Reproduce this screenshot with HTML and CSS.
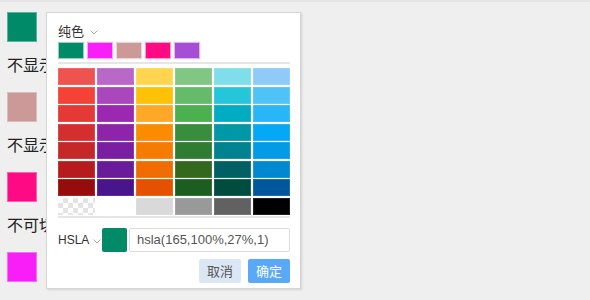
FILE: index.html
```html
<!DOCTYPE html>
<html lang="zh-CN">
<head>
<meta charset="utf-8">
<link rel="stylesheet" href="styles.css">
</head>
<body>
<div class="page">
  <div class="item">
    <div class="swatch" style="background:#008a68"></div>
    <p class="label">不显示透明度</p>
  </div>
  <div class="item">
    <div class="swatch" style="background:#cc9999"></div>
    <p class="label">不显示模式切换</p>
  </div>
  <div class="item">
    <div class="swatch" style="background:#ff0a85"></div>
    <p class="label">不可切换模式</p>
  </div>
  <div class="item">
    <div class="swatch" style="background:#f71ef7"></div>
  </div>
</div>

<div class="popup">
  <div class="head">
    <span class="mode">纯色</span>
    <svg class="chev" width="8" height="5" viewBox="0 0 8 5"><polyline points="0.5,0.5 4,4 7.5,0.5" fill="none" stroke="#aaa" stroke-width="1"/></svg>
  </div>
  <div class="presets">
    <div class="preset" style="background:#008a68"></div>
    <div class="preset" style="background:#f81ef8"></div>
    <div class="preset" style="background:#cc9999"></div>
    <div class="preset" style="background:#ff0a85"></div>
    <div class="preset" style="background:#a64fd4"></div>
  </div>
  <div class="sep"></div>
  <div class="grid-wrap">
    <div class="grid">
      <div class="cell" style="background:#ef5350"></div>
      <div class="cell" style="background:#ba68c8"></div>
      <div class="cell" style="background:#ffd54f"></div>
      <div class="cell" style="background:#81c784"></div>
      <div class="cell" style="background:#80deea"></div>
      <div class="cell" style="background:#90caf9"></div>

      <div class="cell" style="background:#f44336"></div>
      <div class="cell" style="background:#ab47bc"></div>
      <div class="cell" style="background:#ffc107"></div>
      <div class="cell" style="background:#66bb6a"></div>
      <div class="cell" style="background:#26c6da"></div>
      <div class="cell" style="background:#4fc3f7"></div>

      <div class="cell" style="background:#e53935"></div>
      <div class="cell" style="background:#9c27b0"></div>
      <div class="cell" style="background:#ffa726"></div>
      <div class="cell" style="background:#4caf50"></div>
      <div class="cell" style="background:#00acc1"></div>
      <div class="cell" style="background:#29b6f6"></div>

      <div class="cell" style="background:#d32f2f"></div>
      <div class="cell" style="background:#8e24aa"></div>
      <div class="cell" style="background:#fb8c00"></div>
      <div class="cell" style="background:#388e3c"></div>
      <div class="cell" style="background:#0097a7"></div>
      <div class="cell" style="background:#03a9f4"></div>

      <div class="cell" style="background:#c62828"></div>
      <div class="cell" style="background:#7b1fa2"></div>
      <div class="cell" style="background:#f57c00"></div>
      <div class="cell" style="background:#2e7d32"></div>
      <div class="cell" style="background:#00838f"></div>
      <div class="cell" style="background:#039be5"></div>

      <div class="cell" style="background:#b71c1c"></div>
      <div class="cell" style="background:#6a1b9a"></div>
      <div class="cell" style="background:#ef6c00"></div>
      <div class="cell" style="background:#33691e"></div>
      <div class="cell" style="background:#006064"></div>
      <div class="cell" style="background:#0288d1"></div>

      <div class="cell" style="background:#960b0b"></div>
      <div class="cell" style="background:#4a148c"></div>
      <div class="cell" style="background:#e65100"></div>
      <div class="cell" style="background:#1b5e20"></div>
      <div class="cell" style="background:#004d40"></div>
      <div class="cell" style="background:#01579b"></div>

      <div class="cell checker"></div>
      <div class="cell" style="background:#ffffff"></div>
      <div class="cell" style="background:#d9d9d9"></div>
      <div class="cell" style="background:#999999"></div>
      <div class="cell" style="background:#616161"></div>
      <div class="cell" style="background:#000000"></div>
    </div>
  </div>
  <div class="value-row">
    <div class="fmt">
      <span>HSLA</span>
      <svg class="chev" width="8" height="5" viewBox="0 0 8 5"><polyline points="0.5,0.5 4,4 7.5,0.5" fill="none" stroke="#aaa" stroke-width="1"/></svg>
    </div>
    <div class="preview" style="background:#008a68"></div>
    <div class="input">hsla(165,100%,27%,1)</div>
  </div>
  <div class="actions">
    <button class="btn cancel">取消</button>
    <button class="btn ok">确定</button>
  </div>
</div>
</body>
</html>
```

FILE: styles.css
```css
html, body {
  margin: 0;
  padding: 0;
}
body {
  background: #efefef;
  border-top: 2px solid #e4e4e4;
  font-family: "Liberation Sans", "Noto Sans CJK SC", sans-serif;
  color: #222;
  height: 298px;
  overflow: hidden;
  position: relative;
}
.page {
  padding: 10px 7px 0;
  display: flex;
  flex-direction: column;
}
.item {
  display: flex;
  flex-direction: column;
}
.swatch {
  width: 28px;
  height: 28px;
  border: 1px solid rgba(255,255,255,0.35);
}
.label {
  margin: 14px 0 16px;
  font-size: 16px;
  line-height: 20px;
  white-space: nowrap;
}

.popup {
  position: absolute;
  left: 46px;
  top: 10px;
  width: 255px;
  height: 277px;
  box-sizing: border-box;
  background: #fff;
  border: 1px solid #d6d6d6;
  box-shadow: 1px 1px 2px rgba(0,0,0,0.12);
  padding: 8px 10px 0 11px;
  display: flex;
  flex-direction: column;
}
.head {
  height: 19px;
  display: flex;
  align-items: center;
  gap: 6px;
  font-size: 13px;
  color: #333;
}
.chev {
  display: block;
  margin-top: 3px;
}
.presets {
  margin-top: 2px;
  display: flex;
  gap: 3px;
}
.preset {
  width: 24px;
  height: 15px;
  border: 1px solid rgba(255,255,255,0.6);
  outline: 1px solid rgba(0,0,0,0.04);
}
.sep {
  margin-top: 3px;
  height: 2px;
  background: #e6e6e6;
}
.grid-wrap {
  margin-top: 4px;
  padding-bottom: 1px;
  border-bottom: 2px solid #e6e6e6;
}
.grid {
  display: grid;
  grid-template-columns: repeat(6, 1fr);
  grid-template-rows: repeat(8, 17px);
  gap: 1.5px 1.6px;
}
.cell {
  box-shadow: inset 0 0 0 1px rgba(255,255,255,0.12);
}
.checker {
  background-color: #fff;
  background-image:
    linear-gradient(45deg, #e3e3e3 25%, transparent 25%, transparent 75%, #e3e3e3 75%),
    linear-gradient(45deg, #e3e3e3 25%, transparent 25%, transparent 75%, #e3e3e3 75%);
  background-size: 10px 10px;
  background-position: 0 0, 5px 5px;
}
.value-row {
  margin-top: 10px;
  height: 24px;
  display: flex;
  align-items: stretch;
}
.fmt {
  width: 44px;
  display: flex;
  align-items: center;
  gap: 4px;
  font-size: 12px;
  color: #333;
}
.preview {
  width: 25px;
  border-radius: 2px;
}
.input {
  flex: 1;
  margin-left: 2px;
  box-sizing: border-box;
  border: 1px solid #dcdcdc;
  border-radius: 2px;
  padding-left: 7px;
  font-size: 13px;
  line-height: 22px;
  color: #555;
}
.actions {
  margin-top: 7px;
  display: flex;
  justify-content: flex-end;
  gap: 7px;
}
.btn {
  width: 42px;
  height: 24px;
  border: none;
  border-radius: 2px;
  padding: 0;
  font-family: "Noto Sans CJK SC", sans-serif;
  font-size: 13px;
  line-height: 24px;
}
.cancel {
  background: #dce7f5;
  color: #555;
}
.ok {
  background: #59a9f8;
  color: #fff;
}
```
